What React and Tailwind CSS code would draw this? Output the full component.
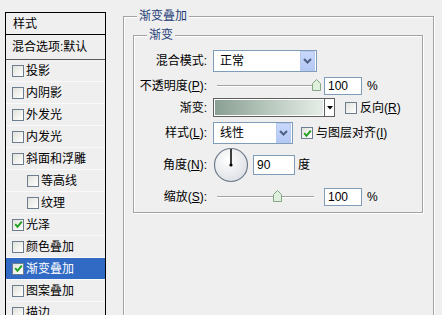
import React from "react";

const F = "font-['Liberation_Sans','Noto_Sans_CJK_SC',sans-serif]";

function Check() {
  return (
    <svg width="9" height="9" viewBox="0 0 9 9">
      <polyline points="1.2,4.2 3.5,6.8 7.8,1.6" fill="none" stroke="#21a121" strokeWidth="2" />
    </svg>
  );
}

function Box({ checked, cls = "" }) {
  return (
    <span
      className={`inline-flex w-[12px] h-[12px] shrink-0 items-center justify-center border border-[#6c7d8f] bg-gradient-to-br from-[#e2e2dc] to-white ${cls}`}
    >
      {checked && <Check />}
    </span>
  );
}

function Chevron() {
  return (
    <svg width="9" height="6" viewBox="0 0 9 6">
      <polyline points="1,1 4.5,4.5 8,1" fill="none" stroke="#4d6185" strokeWidth="2" />
    </svg>
  );
}

function Select({ text, w }) {
  return (
    <div className={`h-[22px] ${w} border border-[#7f9db9] bg-white flex items-center`}>
      <span className="flex-1 pl-[6px] text-[12px] leading-none">{text}</span>
      <span className="w-[15px] h-[20px] mr-px bg-gradient-to-b from-[#c9d8fc] to-[#b3c8f5] border border-[#b7c9ee] flex items-center justify-center">
        <Chevron />
      </span>
    </div>
  );
}

function Thumb() {
  return (
    <svg width="9" height="12" viewBox="0 0 9 12">
      <path d="M0.5 4.5 L4.5 0.5 L8.5 4.5 V11.5 H0.5 Z" fill="#dff0dc" stroke="#86a486" />
    </svg>
  );
}

function Slider({ pos }) {
  return (
    <div className="relative w-[109px] h-[18px]">
      <div className="absolute left-[4px] w-[97px] top-[8px] h-[2px] border-t border-[#a4a4a4] border-b border-b-white" />
      <div className="absolute top-[2px]" style={{ left: pos }}>
        <Thumb />
      </div>
    </div>
  );
}

function Input({ v, w }) {
  return (
    <div className={`${w} h-[18px] border border-[#7f9db9] bg-white flex items-center pl-[3px] text-[12px] leading-none`}>
      {v}
    </div>
  );
}

function Label({ children }) {
  return <div className="w-[79px] pr-[6px] text-right text-[12px] leading-none whitespace-nowrap">{children}</div>;
}

const rows = [
  { t: "投影" },
  { t: "内阴影" },
  { t: "外发光" },
  { t: "内发光" },
  { t: "斜面和浮雕" },
  { t: "等高线", indent: true },
  { t: "纹理", indent: true },
  { t: "光泽", checked: true },
  { t: "颜色叠加" },
  { t: "渐变叠加", checked: true, sel: true },
  { t: "图案叠加" },
  { t: "描边" },
];

export default function App() {
  return (
    <div className={`w-[442px] h-[315px] overflow-hidden bg-[#efefef] flex items-start text-black ${F}`}>
      {/* Left styles list */}
      <div className="ml-[5px] mt-[12px] w-[101px] h-[330px] border border-black bg-[#efefef] flex flex-col shrink-0">
        <div className="h-[22px] border-b border-black flex items-center pl-[7px] text-[12px] leading-none">样式</div>
        <div className="h-[25px] border-b border-[#5a5a5a] flex items-center pl-[6px] text-[12px] leading-none whitespace-nowrap">
          混合选项:默认
        </div>
        {rows.map((r) => (
          <div
            key={r.t}
            className={`h-[22px] flex items-center border-b border-b-[#fafafa] text-[12px] leading-none whitespace-nowrap ${
              r.indent ? "pl-[21px]" : "pl-[6px]"
            } ${r.sel ? "bg-[#316ac5] text-white" : ""}`}
          >
            <Box checked={r.checked} cls="mr-[2px]" />
            {r.t}
          </div>
        ))}
      </div>

      {/* Right group */}
      <div className="ml-[17px] mt-[8px] w-[311px] flex flex-col shrink-0">
        <div className="relative z-10 ml-[14px] -mb-[8px] self-start bg-[#efefef] px-[2px] h-[16px] flex items-center text-[12px] leading-none text-[#1f3f78]">
          渐变叠加
        </div>
        <div className="h-[320px] border border-[#a3a3a3] shadow-[inset_1px_1px_0_#ffffff,1px_1px_0_#ffffff] flex flex-col">
          <div className="ml-[9px] mt-[10px] w-[290px] flex flex-col">
            <div className="relative z-10 ml-[14px] -mb-[8px] self-start bg-[#efefef] px-[2px] h-[16px] flex items-center text-[12px] leading-none text-[#1f3f78]">
              渐变
            </div>
            <div className="border border-[#a3a3a3] shadow-[inset_1px_1px_0_#ffffff,1px_1px_0_#ffffff] flex flex-col pb-[6px]">
              {/* row 1 */}
              <div className="mt-[14px] h-[22px] flex items-center">
                <Label>混合模式:</Label>
                <Select text="正常" w="w-[104px]" />
              </div>
              {/* row 2 */}
              <div className="mt-[5px] h-[18px] flex items-center">
                <Label>
                  不透明度(<u>P</u>):
                </Label>
                <Slider pos={99} />
                <div className="ml-[2px]">
                  <Input v="100" w="w-[38px]" />
                </div>
                <span className="ml-[5px] text-[12px]">%</span>
              </div>
              {/* row 3 */}
              <div className="mt-[3px] h-[19px] flex items-center">
                <Label>渐变:</Label>
                <div className="w-[122px] h-[19px] border border-[#5e5e5e] flex bg-white">
                  <div className="flex-1 m-px bg-gradient-to-r from-[#8a9f93] via-[#b8c8bd] to-[#e6ede8]" />
                  <div className="w-[10px] border-l border-[#5e5e5e] flex items-center justify-center">
                    <svg width="6" height="4" viewBox="0 0 6 4">
                      <path d="M0 0 H6 L3 3.5 Z" fill="#000" />
                    </svg>
                  </div>
                </div>
                <Box cls="ml-[10px]" />
                <span className="ml-[3px] text-[12px] leading-none whitespace-nowrap">
                  反向(<u>R</u>)
                </span>
              </div>
              {/* row 4 */}
              <div className="mt-[5px] h-[22px] flex items-center">
                <Label>
                  样式(<u>L</u>):
                </Label>
                <Select text="线性" w="w-[80px]" />
                <Box checked cls="ml-[8px]" />
                <span className="ml-[3px] text-[12px] leading-none whitespace-nowrap">
                  与图层对齐(<u>I</u>)
                </span>
              </div>
              {/* row 5 */}
              <div className="mt-[3px] h-[35px] flex items-center">
                <Label>
                  角度(<u>N</u>):
                </Label>
                <svg width="36" height="36" viewBox="0 0 36 36">
                  <defs>
                    <radialGradient id="dg" cx="40%" cy="35%" r="70%">
                      <stop offset="0%" stopColor="#ffffff" />
                      <stop offset="100%" stopColor="#dcdfe4" />
                    </radialGradient>
                  </defs>
                  <circle cx="18" cy="18" r="16.5" fill="url(#dg)" stroke="#6f7c8a" strokeWidth="1.2" />
                  <line x1="18" y1="18" x2="18" y2="2" stroke="#000" strokeWidth="1.5" />
                  <circle cx="18" cy="18" r="1.6" fill="#000" />
                </svg>
                <div className="ml-[4px]">
                  <div className="w-[42px] h-[20px] border border-[#7f9db9] bg-white flex items-center pl-[3px] text-[12px] leading-none">
                    90
                  </div>
                </div>
                <span className="ml-[3px] text-[12px] leading-none">度</span>
              </div>
              {/* row 6 */}
              <div className="mt-[6px] h-[18px] flex items-center">
                <Label>
                  缩放(<u>S</u>):
                </Label>
                <Slider pos={60} />
                <div className="ml-[2px]">
                  <Input v="100" w="w-[38px]" />
                </div>
                <span className="ml-[5px] text-[12px]">%</span>
              </div>
            </div>
          </div>
        </div>
      </div>
    </div>
  );
}
